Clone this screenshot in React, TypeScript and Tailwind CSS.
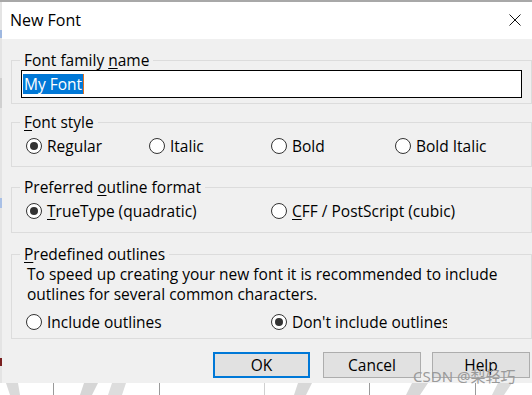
import React from "react";

function Radio({ checked, label, clip }: { checked?: boolean; label: React.ReactNode; clip?: boolean }) {
  return (
    <div className="flex items-center h-[22px]">
      <span className="w-[16px] h-[16px] rounded-full border border-[#333333] bg-white flex items-center justify-center shrink-0">
        {checked && <span className="w-[8px] h-[8px] rounded-full bg-[#333333]" />}
      </span>
      <span className={"ml-[5px] whitespace-nowrap leading-[20px] " + (clip ? "w-[155px] overflow-hidden" : "")}>{label}</span>
    </div>
  );
}

function Group({ legend, className, children }: { legend: React.ReactNode; className?: string; children: React.ReactNode }) {
  return (
    <fieldset className={"border border-[#dcdcdc] mx-0 " + (className ?? "")}>
      <legend className="ml-[8px] px-[4px] leading-[20px] h-[20px]">{legend}</legend>
      {children}
    </fieldset>
  );
}

export default function App() {
  return (
    <div className="relative w-[532px] h-[395px] overflow-hidden bg-white font-['Open_Sans',sans-serif] text-[15.5px] text-black flex flex-col">
      <div className="h-[2px] bg-[#a8a8a8] shrink-0" />
      <div className="flex h-[381px] shrink-0">
        <div className="w-[2px] flex flex-col bg-[#e4e4e4]">
          <div className="h-[28px]" />
          <div className="h-[8px] bg-[#9fb8e0]" />
          <div className="h-[40px]" />
          <div className="h-[30px] bg-[#d0d0d0]" />
          <div className="h-[90px]" />
          <div className="h-[10px] bg-[#a9c0e6]" />
          <div className="h-[150px]" />
          <div className="h-[8px] bg-[#7a2020]" />
        </div>
        <div className="flex-1 flex flex-col">
          <div className="h-[37px] bg-white flex items-center justify-between pl-[8px] pr-[11px] shrink-0">
            <span className="text-[16px] leading-[20px] mt-[-1px]">New Font</span>
            <svg width="12" height="12" viewBox="0 0 12 12" className="mt-[-1px]">
              <path d="M0.5 0.5 L11.5 11.5 M11.5 0.5 L0.5 11.5" stroke="#111" strokeWidth="1" fill="none" />
            </svg>
          </div>
          <div className="flex-1 bg-[#f0f0f0] pl-[9px] pr-0 pt-[11px] flex flex-col">
            <Group legend={<>Font family <u className="underline-offset-2">n</u>ame</>} className="pb-[5px]">
              <div className="ml-[9px] mr-[9px] h-[28px] border border-black bg-white flex items-center pl-[1px]">
                <span className="bg-[#0078d7] text-white leading-[20px] pl-[1px] pr-[1px]">My Font</span>
                <span className="w-[1px] h-[20px] bg-[#e07020]" />
              </div>
            </Group>
            <Group legend={<><u className="underline-offset-2">F</u>ont style</>} className="mt-[8px] pb-[9px]">
              <div className="grid grid-cols-[123px_122px_124px_1fr] pl-[14px] mt-[3px]">
                <Radio checked label="Regular" />
                <Radio label="Italic" />
                <Radio label="Bold" />
                <Radio label="Bold Italic" />
              </div>
            </Group>
            <Group legend={<>Preferred <u className="underline-offset-2">o</u>utline format</>} className="mt-[10px] pb-[10px]">
              <div className="grid grid-cols-[245px_1fr] pl-[14px] mt-[3px]">
                <Radio checked label={<><u className="underline-offset-2">T</u>rueType (quadratic)</>} />
                <Radio label={<><u className="underline-offset-2">C</u>FF / PostScript (cubic)</>} />
              </div>
            </Group>
            <Group legend={<><u className="underline-offset-2">P</u>redefined outlines</>} className="mt-[11px] pb-[5px]">
              <div className="pl-[15px] leading-[20px] whitespace-nowrap">
                <div>To speed up creating your new font it is recommended to include</div>
                <div>outlines for several common characters.</div>
              </div>
              <div className="grid grid-cols-[245px_1fr] pl-[14px] mt-[7px]">
                <Radio label="Include outlines" />
                <Radio checked clip label="Don't include outlines" />
              </div>
            </Group>
            <div className="flex justify-end pr-[2px] mt-[13px]">
              <button className="w-[97px] h-[26px] border-2 border-[#0078d7] bg-[#e1e1e1] flex items-center justify-center leading-[20px]">OK</button>
              <button className="ml-[13px] w-[98px] h-[26px] border border-[#adadad] bg-[#e1e1e1] flex items-center justify-center leading-[20px]">Cancel</button>
              <button className="ml-[11px] w-[98px] h-[26px] border border-[#adadad] bg-[#e1e1e1] flex items-center justify-center leading-[20px]">Help</button>
            </div>
          </div>
        </div>
      </div>
      <div className="relative h-[12px] shrink-0 bg-white flex">
        <div className="w-[54px] border-r border-[#9a9a9a]" />
        <div className="w-[106px] border-r border-[#9a9a9a]" />
        <div className="w-[105px] border-r border-[#d0d0d0]" />
        <div className="w-[105px] border-r border-[#9a9a9a]" />
        <div className="w-[106px] border-r border-[#9a9a9a]" />
        <svg className="absolute inset-0" width="532" height="12" viewBox="0 0 532 12">
          <path d="M6 0 L18 0 L20 12 L10 12 Z" fill="#dadada" />
          <path d="M84 0 L98 0 L92 12 L80 12 Z" fill="#d6d6d6" />
          <path d="M112 0 L126 0 L122 12 L108 12 Z" fill="#dddddd" />
          <path d="M298 0 L312 0 L306 12 L294 12 Z" fill="#d8d8d8" />
          <path d="M412 0 L428 0 L420 12 L406 12 Z" fill="#d8d8d8" />
          <path d="M498 0 L512 0 L504 12 L492 12 Z" fill="#dcdcdc" />
        </svg>
      </div>
      <div className="absolute left-[413px] top-[366px] text-[15px] leading-[20px] text-[#9a9a9a] font-['Noto_Sans','Noto_Sans_CJK_SC',sans-serif] whitespace-nowrap">
        CSDN @梨轻巧
      </div>
    </div>
  );
}
